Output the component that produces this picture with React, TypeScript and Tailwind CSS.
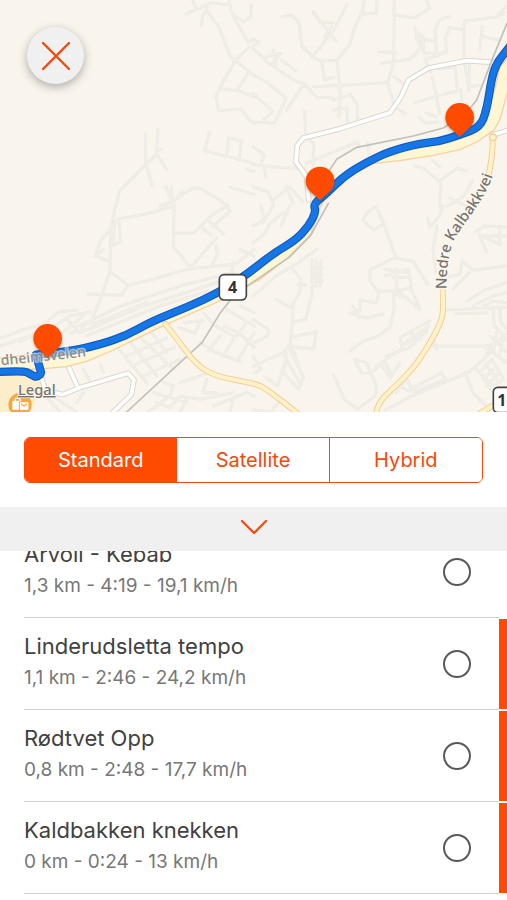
import { useEffect, useRef, useState } from "react";

/* Map geometry: one 762 x 618 tile per quadrant, in a 1521 x 1236 drawing. */
const streets = [
  {
    x: 0,
    y: 0,
    lines: [
      "M558 42 L636 8 L692 16 M578 0 L586 20 M604 75 L608 48 L622 22 M622 36 L655 78 L692 172 L706 182",
      "M688 0 L690 24 L706 60 L746 130 M700 44 L730 66 L752 50 L754 16",
      "M746 142 L706 182 L660 262 L648 290 L656 332 L722 326 L750 362 L762 370",
      "M706 182 L762 226 M660 266 L712 272 L762 290 M712 268 L746 218 M746 128 L762 116",
      "M436 402 L438 492 L456 556 M474 386 L470 462 L500 508 M470 462 L438 494 L358 574 L348 618 M470 452 L484 446",
      "M628 398 L614 452 L762 490 M680 466 L686 414 L724 422 L718 474 M742 508 L762 514",
      "M498 560 L516 606 L578 564 L604 566 L686 618 M514 560 L518 606 L480 618 M546 574 L520 606 M692 562 L762 584",
    ],
  },
  {
    x: 759,
    y: 0,
    lines: [
      "M86 50 L116 46 L138 66 L146 136 L182 172 L206 184 L252 180 L290 134 L308 76 L330 30 L334 0",
      "M180 36 L248 122 M200 66 L240 68 M182 166 L240 94 L282 14 M236 78 L214 112 M322 42 L370 40 L372 0",
      "M424 0 L422 186 L404 248 L182 260 M252 180 L262 290 L258 350 M290 282 L312 312 L314 360 M240 300 L290 286",
      "M426 44 L484 54 L530 24 L520 0 M378 156 L430 158 M384 190 L470 178 L502 146 L484 82 M500 100 L514 160 L572 160",
      "M590 50 L560 58 L546 92 L550 150 M736 40 L762 20 M634 64 L736 50 L752 40 M634 70 L632 90 L590 82 L578 110 L580 156 L516 180",
      "M632 86 L634 178 L648 272 M490 116 L542 122 M510 110 L512 146 M694 110 L738 120 M688 80 L680 150",
      "M486 308 L546 290 L624 270 L626 298 M538 230 L560 340 M516 178 L534 216 M556 208 L606 200 L612 262 M650 180 L648 260 L680 256",
      "M0 146 L54 196 L118 238 L154 252 L190 292 L240 294 M54 196 L82 160 L40 170 M60 150 L70 196 M86 180 L128 212",
      "M0 224 L40 246 L100 294 L64 370 L0 366 M150 256 L100 330 M0 120 L18 126 L0 138 M0 280 L60 334 L34 358",
      "M206 184 L214 240 L242 232 M240 330 L282 324 L284 370 M154 334 L158 400 M404 248 L424 320 L456 340 M422 230 L450 250",
      "M160 490 L314 426 L318 440 M180 496 L182 430 L168 420 M0 494 L54 500 L154 506 M34 500 L38 530 M0 440 L34 464 L24 494",
      "M498 352 L518 370 L552 366 M520 340 L548 350 M346 430 L350 490 M60 600 L110 560 L150 606 M100 560 L120 610 M0 560 L46 576 L62 618",
      "M486 498 L512 506 L564 548 L560 618 M564 540 L614 504 L640 514 M538 480 L560 500 M660 540 L630 590 L584 618 M590 594 L640 618",
    ],
  },
  {
    x: 0,
    y: 618,
    lines: [
      "M346 0 L332 70 L330 196 L306 266 L276 340 L246 364 M356 40 L362 108 L338 118 M344 46 L340 110 M352 40 L438 24 L522 0",
      "M332 70 L302 104 L286 150 L324 164 M290 152 L310 130 M330 196 L384 238 L364 268 L264 264 M384 238 L450 222 L570 188",
      "M522 0 L520 124 L544 150 L572 188 L708 174 L762 130 M528 82 L580 82 L640 24 L680 0 M572 184 L650 96 M622 40 L670 84 M600 60 L634 88",
      "M648 120 L652 146 L636 178 M700 170 L690 210 M720 130 L762 150 M680 0 L690 16 L640 60",
      "M0 396 L72 370 L130 356 L176 318 L232 312 M232 362 L360 302 L450 270 L560 234 L700 200 M240 380 L420 304 L656 228",
      "M150 370 L210 330 L270 318 M180 384 L250 330 M0 420 L90 390 M210 380 L270 370 L380 320 M252 352 L290 350 L440 290",
      "M260 390 L380 340 L480 300 L620 256 M60 408 L130 370 M200 340 L230 370",
      "M352 424 L440 530 M384 400 L470 510 M416 388 L520 490 M450 374 L500 440 M380 450 L500 396 M396 480 L524 424 M430 510 L540 460",
      "M536 364 L584 382 L600 350 M552 350 L610 344 M612 322 L640 356 L700 390 M672 360 L720 382 L762 424 M600 410 L650 440 L720 466",
      "M680 310 L762 360 M722 300 L762 320 M660 390 L626 434 M700 400 L670 450 M762 380 L716 460 M740 350 L710 390",
      "M250 490 L278 540 M300 476 L310 500 M130 560 L180 618 M170 578 L230 618 M250 560 L230 590",
      "M444 618 L510 570 L520 540 L490 528 M470 590 L510 604 L540 570 L600 580 L700 560 M460 560 L560 590 M620 520 L608 560 L650 560 M540 530 L630 500",
      "M640 600 L740 560 L762 570 M690 618 L700 580 M540 618 L560 580",
    ],
  },
  {
    x: 759,
    y: 618,
    lines: [
      "M192 130 L130 174 L72 208 L0 270 M120 190 L144 220 L140 260 L122 290 L112 416 L90 440 L0 482 M70 280 L110 304 L122 290",
      "M178 160 L178 260 L158 340 L120 348 M190 162 L190 240 M204 164 L202 240 M176 184 L208 184 M176 204 L208 204 M176 224 L208 224 M134 236 L158 236",
      "M112 394 L190 378 L182 430 L106 420 L152 514 L136 550 L92 500 L100 440 M92 446 L140 530 M120 430 L148 510 M92 480 L74 540 L40 516",
      "M0 340 L46 370 L44 390 L0 412 M0 450 L24 490 L6 500 M24 0 L34 40 L0 60 M30 50 L60 0 M84 60 L110 0 M0 110 L36 82 L50 54 L90 20",
      "M370 0 L342 20 L330 44 L362 72 L392 54 L374 14 M392 54 L430 158",
      "M524 234 L480 166 L424 156 L352 190 L350 224 L378 260 L370 290 L320 282 L322 312 L290 322 L340 336 L390 324 M300 300 L320 336",
      "M372 254 L420 256 L424 304 L412 362 L376 390 L330 406 L290 436 M420 256 L476 246 L466 190 L396 210 M432 190 L430 266 M396 190 L466 200 M420 216 L472 214 M440 260 L500 310 L476 252 M440 270 L466 278",
      "M570 0 L560 30 L530 64 L524 36 M552 60 L540 130 L548 200 M580 212 L620 206 L628 166 L660 192 L762 180 M600 248 L650 200",
      "M700 140 L680 86 L740 116 M670 76 L694 60 L762 64 M680 90 L762 90 M740 60 L740 110",
      "M578 312 L762 304 M610 324 L700 320 M642 286 L700 250 L762 230 M660 300 L720 270 L762 260 M690 300 L720 286 L762 290 M720 310 L724 360 L762 400 M740 312 L744 350 L762 370",
      "M540 420 L700 420 L762 400 M540 400 L552 430 M700 440 L762 380 M712 390 L762 440 M690 420 L762 470 M730 380 L720 440 M752 384 L740 450",
      "M440 396 L530 344 L520 380 L446 420 Z M456 410 L520 366 M400 450 L470 424 L502 396 M470 380 L500 396 M370 480 L446 430",
      "M240 504 L274 580 L314 610 L366 570 L370 540 L340 470 L304 460 L324 500 L350 502 L384 476 L412 516 L440 470 M396 468 L416 506",
      "M396 612 L480 568 L650 498 L712 440 M480 546 L566 500 L576 520 L486 556 Z M430 560 L460 516 L476 550 M440 540 L470 556",
      "M636 500 L660 560 L700 600 M670 490 L720 540 L752 520 L716 460 L680 500 M690 520 L720 490 M700 540 L740 500 M700 480 L740 530 M690 510 L716 556",
      "M0 612 L60 618 M60 606 L90 580",
    ],
  },
];

/* Rounds the corners of a list of points: each inner point bends the line. */
function curve(points: number[][]) {
  const last = points.length - 1;
  let d = `M${points[0][0]} ${points[0][1]}`;
  for (let i = 1; i < last; i++) {
    const [x, y] = points[i];
    const [nx, ny] = points[i + 1];
    const endX = i === last - 1 ? nx : (x + nx) / 2;
    const endY = i === last - 1 ? ny : (y + ny) / 2;
    d += ` Q${x} ${y} ${endX} ${endY}`;
  }
  return d;
}

const whiteRoads = [
  "M1483 187 L1400 182 L1286 204 L1226 240 L1200 296 L1170 338 L1020 386 L910 414 L892 436 L888 486 L920 530 L926 600",
  "M1521 392 L1480 404",
  "M120 1120 L136 1170 L188 1184 L236 1164 L384 1120 L402 1140 L394 1184 L340 1236",
  "M204 1096 L234 1164",
];

const yellowRoads = [
  curve([[1478, 412], [1480, 460], [1464, 535]]),
  curve([[1328, 868], [1332, 930], [1318, 980], [1252, 1092], [1190, 1155], [1132, 1210], [1128, 1242]]),
  curve([[496, 972], [530, 1015], [590, 1096], [650, 1130], [762, 1150], [800, 1166], [895, 1242]]),
  "M1440 1240 L1490 1210",
];

const highway =
  "M-10 1076 L100 1062 L300 1034 L460 966 L660 876 L820 760 L920 680 L948 632 L1030 530 L1180 450 L1320 424 L1430 378 L1462 330 L1484 270 L1500 200 L1535 160 L1535 232 L1524 270 L1510 322 Q1500 366 1480 392 L1430 426 L1380 449 L1300 466 L1200 482 L1120 490 L1050 530 L980 590 L960 622 L932 704 L860 776 L780 838 L652 906 L484 980 L340 1050 L260 1084 L200 1100 L130 1106 L-10 1112 Z";

const railways = [
  "M380 1236 L540 1088 L606 1028 L660 940 L704 884 L870 770 L932 706 L985 610",
  "M985 516 L1010 478 L1070 442 L1240 408 L1330 384 L1398 340 L1430 300 L1480 170 L1521 70",
];

const route = [
  curve([[-10, 1116], [70, 1112], [90, 1122], [106, 1130]]),
  curve([[106, 1130], [126, 1126], [118, 1100], [108, 1064]]),
  curve([[108, 1064], [200, 1056], [300, 1034], [380, 1006], [455, 964], [560, 922], [660, 876], [740, 824], [820, 760], [885, 722], [925, 680], [948, 636], [940, 612], [980, 580], [1030, 530], [1100, 486], [1170, 454], [1260, 430], [1320, 424], [1380, 404], [1440, 382], [1460, 330], [1474, 240], [1488, 192], [1521, 150], [1532, 136]]),
].join(" ");

function Pin({ x, y }: { x: number; y: number }) {
  return (
    <g transform={`translate(${x} ${y})`}>
      <path
        d="M0 58 L-31 30 A43 43 0 1 1 31 30 Z"
        fill="#40403a"
        opacity="0.35"
        transform="translate(0 5)"
        filter="url(#soft)"
      />
      <path d="M0 58 L-31 30 A43 43 0 1 1 31 30 Z" fill="#ff4b00" />
    </g>
  );
}

function RouteMap() {
  return (
    <svg
      viewBox="0 0 1521 1236"
      preserveAspectRatio="xMidYMid slice"
      className="block h-full w-full bg-[#f9f5ed]"
      role="img"
      aria-label="Map"
      fill="none"
      strokeLinejoin="round"
      strokeLinecap="round"
    >
      <defs>
        <filter id="soft" x="-50%" y="-50%" width="200%" height="200%">
          <feGaussianBlur stdDeviation="5" />
        </filter>
        <path id="nedre" d="M1340 868 C1340 790 1348 740 1370 706 C1400 660 1448 604 1474 540 L1496 480" />
      </defs>
      <path d="M-5 1110 L120 1104 L124 1160 L90 1240 L-5 1240 Z" fill="#fdeecb" />
      {streets.map((tile) => (
        <g key={`${tile.x}-${tile.y}`} transform={`translate(${tile.x} ${tile.y})`}>
          {tile.lines.map((d) => (
            <path key={d} d={d} stroke="#ebe9e3" strokeWidth="9" />
          ))}
          {tile.lines.map((d) => (
            <path key={`${d}-in`} d={d} stroke="#f1eee8" strokeWidth="5" />
          ))}
        </g>
      ))}
      {whiteRoads.map((d) => (
        <path key={d} d={d} stroke="#d9d7d1" strokeWidth="17" />
      ))}
      {whiteRoads.map((d) => (
        <path key={`${d}-in`} d={d} stroke="#ffffff" strokeWidth="11" />
      ))}
      <path d={highway} fill="#fff6d3" stroke="#f3d2a0" strokeWidth="4" />
      {railways.map((d) => (
        <path key={d} d={d} stroke="#c2c0bb" strokeWidth="5" />
      ))}
      {yellowRoads.map((d) => (
        <path key={d} d={d} stroke="#efd09c" strokeWidth="18" />
      ))}
      {yellowRoads.map((d) => (
        <path key={`${d}-in`} d={d} stroke="#fff2c6" strokeWidth="12" />
      ))}
      <circle cx="1479" cy="412" r="10" fill="#fff2c6" stroke="#efd09c" strokeWidth="4" />
      <path d={route} stroke="#0d5cc4" strokeWidth="25" />
      <path d={route} stroke="#1676e6" strokeWidth="18" />

      <g fontFamily="'Noto Sans', sans-serif" fill="#77736f">
        <text
          fontSize="45"
          fontWeight="500"
          stroke="#fbf7ef"
          strokeWidth="8"
          paintOrder="stroke"
          strokeOpacity="0.9"
        >
          <textPath href="#nedre">Nedre Kalbakkvei</textPath>
        </text>
        <text
          x="4"
          y="1096"
          fontSize="42"
          fontWeight="500"
          fill="#8b8b8c"
          stroke="#fbf7ef"
          strokeWidth="8"
          strokeOpacity="0.6"
          paintOrder="stroke"
          transform="rotate(-6 4 1096)"
        >
          dheimsveien
        </text>
      </g>
      <Pin x={143} y={1015} />
      <Pin x={960} y={543} />
      <Pin x={1379} y={352} />

      <circle cx="60" cy="1214" r="35" fill="#f6a83c" />
      <rect x="37" y="1202" width="32" height="27" rx="3" fill="#ffffff" />
      <path d="M46 1202 V1195 H60 V1202" stroke="#ffffff" strokeWidth="4" />
      <rect x="58" y="1205" width="29" height="26" rx="3" fill="#ffffff" stroke="#f6a83c" strokeWidth="3" />
      <path d="M65 1212 Q72 1224 79 1212" stroke="#f6a83c" strokeWidth="4" />
      <text
        x="54"
        y="1185"
        fontFamily="'Noto Sans', sans-serif"
        fontSize="44"
        fontWeight="500"
        fill="#77736f"
        stroke="#fbf7ef"
        strokeWidth="5"
        paintOrder="stroke"
        textDecoration="underline"
      >
        Legal
      </text>

      <g fontFamily="'Noto Sans', sans-serif" fontWeight="700" fontSize="48" fill="#333333">
        <rect x="658" y="824" width="81" height="76" rx="14" fill="#ffffff" stroke="#444444" strokeWidth="5" />
        <text x="698" y="879" textAnchor="middle">
          4
        </text>
        <rect x="1480" y="1162" width="100" height="76" rx="14" fill="#ffffff" stroke="#444444" strokeWidth="5" />
        <text x="1492" y="1217">16</text>
      </g>
    </svg>
  );
}

const mapStyles = ["Standard", "Satellite", "Hybrid"];

const segments = [
  { name: "Årvoll - Kebab", stats: "1,3 km - 4:19 - 19,1 km/h", marked: false },
  { name: "Linderudsletta tempo", stats: "1,1 km - 2:46 - 24,2 km/h", marked: true },
  { name: "Rødtvet Opp", stats: "0,8 km - 2:48 - 17,7 km/h", marked: true },
  { name: "Kaldbakken knekken", stats: "0 km - 0:24 - 13 km/h", marked: true },
];

export default function App() {
  const [style, setStyle] = useState("Standard");
  const list = useRef<HTMLUListElement>(null);

  useEffect(() => {
    if (list.current) list.current.scrollTop = 25;
  }, []);

  return (
    <main className="flex h-screen flex-col bg-white font-['Inter',sans-serif] text-[#414141]">
      <section className="relative h-[412px] shrink-0 overflow-hidden">
        <RouteMap />
        <button
          type="button"
          aria-label="Close"
          className="absolute top-[27px] left-[27px] flex size-[57px] items-center justify-center rounded-full bg-[#f0f0f0] shadow-[0_3px_10px_rgba(0,0,0,0.3)]"
        >
          <svg viewBox="0 0 28 28" className="size-7" stroke="#f4490c" strokeWidth="2.4" strokeLinecap="round">
            <path d="M1 1 L27 27 M27 1 L1 27" />
          </svg>
        </button>
      </section>

      <div className="shrink-0 px-6 pt-[25px] pb-6">
        <div
          role="group"
          aria-label="Map style"
          className="grid h-[46px] grid-cols-3 divide-x divide-[#f4490c] overflow-hidden rounded-md border border-[#f4490c]"
        >
          {mapStyles.map((name) => (
            <button
              key={name}
              type="button"
              aria-pressed={style === name}
              onClick={() => setStyle(name)}
              className={`text-xl ${style === name ? "bg-[#ff4b00] text-white" : "bg-white text-[#f4490c]"}`}
            >
              {name}
            </button>
          ))}
        </div>
      </div>

      <button
        type="button"
        aria-label="Collapse list"
        className="flex h-11 shrink-0 items-center justify-center bg-[#f0f0f0] pb-1"
      >
        <svg viewBox="0 0 26 14" className="h-[14px] w-[26px]" fill="none" stroke="#f4490c" strokeWidth="2.2" strokeLinecap="round">
          <path d="M1 1 L13 13 L25 1" />
        </svg>
      </button>

      <ul ref={list} className="min-h-0 flex-1 overflow-y-auto pb-2 [scrollbar-width:none]">
        {segments.map((segment) => (
          <li key={segment.name} className="flex h-[92px]">
            <label className="ml-6 flex flex-1 items-center justify-between border-b border-[#d0d0d0]">
              <span className="flex flex-col pb-1">
                <span className="text-[22px] leading-8">{segment.name}</span>
                <span className="text-[19px] leading-8 text-[#777777]">{segment.stats}</span>
              </span>
              <input
                type="radio"
                name="segment"
                className="mr-7 size-7 appearance-none rounded-full border-2 border-[#595959] checked:bg-[#ff4b00]"
              />
            </label>
            <span className={`my-px w-2 ${segment.marked ? "bg-[#ff4b00]" : ""}`} />
          </li>
        ))}
      </ul>
    </main>
  );
}
